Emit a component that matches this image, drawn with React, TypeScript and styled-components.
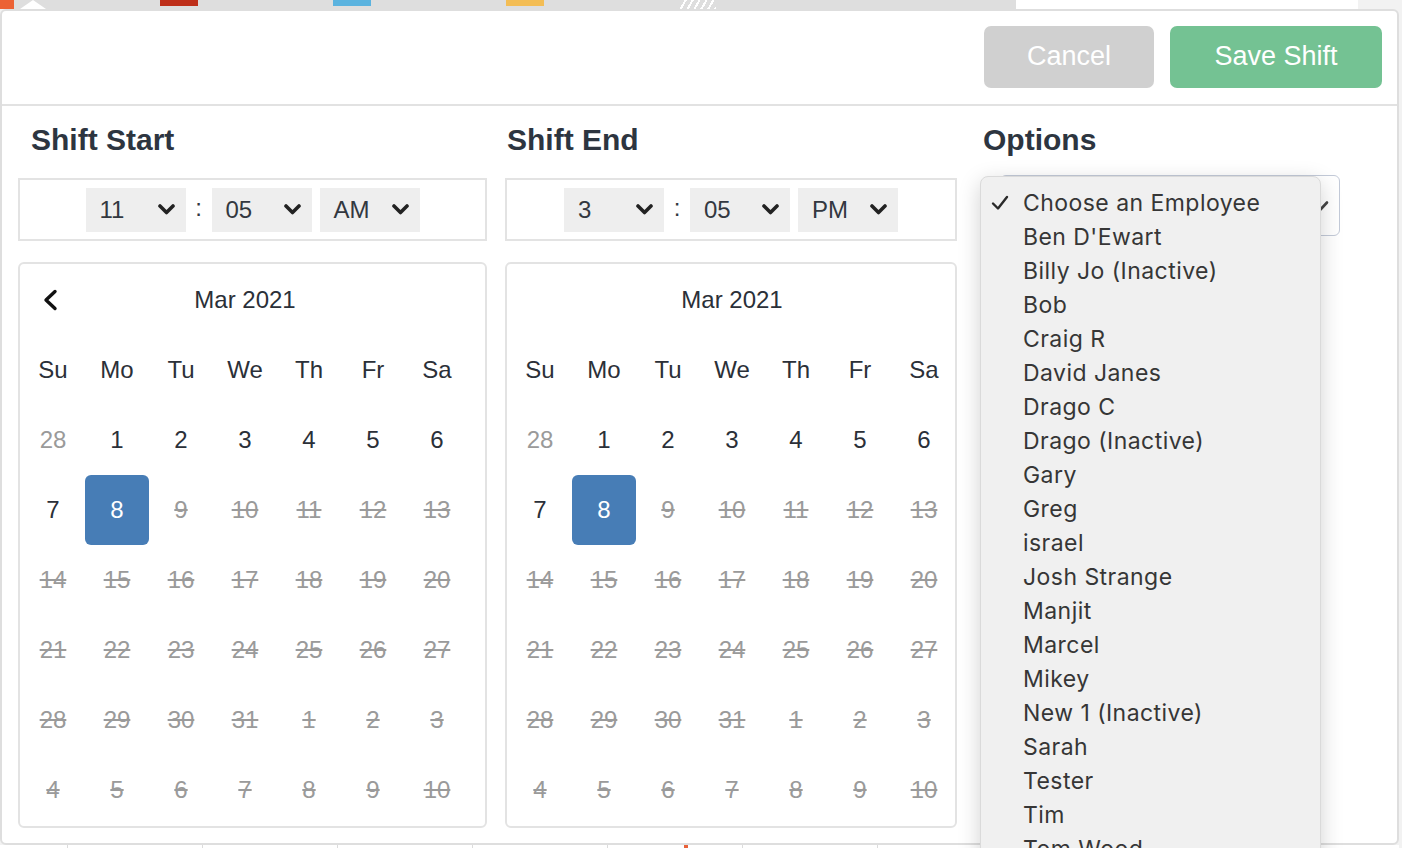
import React from 'react';
import styled, { createGlobalStyle } from 'styled-components';

const GlobalStyle = createGlobalStyle`
    html, body {
        margin: 0;
        padding: 0;
        background: #f2f2f2;
        font-family: "Liberation Sans", Arial, sans-serif;
    }
    * {
        box-sizing: border-box;
    }
`;

const Screen = styled.div`
    width: 1402px;
    height: 848px;
    overflow: hidden;
    display: flex;
    flex-direction: column;
    background: #f2f2f2;
`;

const TopStrip = styled.div`
    height: 9px;
    display: flex;
    flex-shrink: 0;
    background: #dedede;
`;

const Strip = styled.div<{ $w: number; $color?: string; $h?: number }>`
    width: ${(p) => p.$w}px;
    height: ${(p) => p.$h ?? 9}px;
    flex-shrink: 0;
    background: ${(p) => p.$color ?? 'transparent'};
`;

const Notch = styled.div`
    width: 26px;
    margin-left: 6px;
    height: 0;
    flex-shrink: 0;
    border-left: 13px solid transparent;
    border-right: 13px solid transparent;
    border-bottom: 9px solid #ffffff;
`;

const Hatch = styled.div`
    width: 36px;
    flex-shrink: 0;
    background: repeating-linear-gradient(120deg, #dedede 0 4px, #ffffff 4px 6px);
`;

const Modal = styled.div`
    width: 1399px;
    height: 836px;
    flex-shrink: 0;
    background: #ffffff;
    border: 2px solid #dedede;
    border-radius: 6px;
    display: flex;
    flex-direction: column;
`;

const Header = styled.div`
    height: 95px;
    flex-shrink: 0;
    display: flex;
    align-items: center;
    justify-content: flex-end;
    gap: 16px;
    padding: 0 15px 0 0;
    border-bottom: 2px solid #e2e2e2;
`;

const Button = styled.button<{ $primary?: boolean }>`
    height: 62px;
    width: ${(p) => (p.$primary ? 212 : 170)}px;
    border: none;
    border-radius: 7px;
    background: ${(p) => (p.$primary ? '#74c293' : '#d0d0d0')};
    color: #ffffff;
    font-family: "Liberation Sans", Arial, sans-serif;
    font-size: 27px;
    padding: 0;
    margin-top: -2px;
`;

const Body = styled.div`
    display: grid;
    grid-template-columns: 469px 452px 1fr;
    column-gap: 18px;
    padding: 17px 0 0 16px;
`;

const Column = styled.div`
    display: flex;
    flex-direction: column;
    position: relative;
`;

const Title = styled.h2<{ $indent: number }>`
    margin: 0 0 21px ${(p) => p.$indent}px;
    font-size: 30px;
    line-height: 34px;
    font-weight: 700;
    color: #2d3540;
`;

const TimeBox = styled.div`
    height: 63px;
    border: 2px solid #e3e3e3;
    display: flex;
    align-items: center;
    justify-content: center;
`;

const TimeSelect = styled.div<{ $gapLeft?: number }>`
    width: 100px;
    height: 44px;
    margin-left: ${(p) => p.$gapLeft ?? 0}px;
    background: #eeeeee;
    display: flex;
    align-items: center;
    justify-content: space-between;
    padding: 0 11px 0 14px;
    font-size: 24px;
    color: #333840;
`;

const Colon = styled.span`
    width: 26px;
    text-align: center;
    font-size: 24px;
    color: #333840;
    margin-top: -4px;
`;

const Calendar = styled.div`
    margin-top: 21px;
    height: 566px;
    border: 2px solid #e3e3e3;
    border-radius: 6px;
    padding: 1px;
`;

const CalHeader = styled.div`
    width: 448px;
    height: 70px;
    display: grid;
    grid-template-columns: 64px 1fr 64px;
    align-items: center;
`;

const BackArrow = styled.div`
    display: flex;
    align-items: center;
    padding-left: 21px;
`;

const MonthLabel = styled.div`
    text-align: center;
    font-size: 24px;
    color: #2b3038;
`;

const Grid = styled.div`
    width: 448px;
    display: grid;
    grid-template-columns: repeat(7, 64px);
    grid-auto-rows: 70px;
`;

type DayKind = 'normal' | 'muted' | 'off' | 'selected' | 'name';

const Day = styled.div<{ $kind: DayKind }>`
    display: flex;
    align-items: center;
    justify-content: center;
    font-size: 24px;
    border-radius: 6px;
    color: ${(p) =>
        p.$kind === 'selected' ? '#ffffff' : p.$kind === 'muted' || p.$kind === 'off' ? '#9a9a9a' : '#2b3038'};
    background: ${(p) => (p.$kind === 'selected' ? '#477db6' : 'transparent')};
    text-decoration: ${(p) => (p.$kind === 'off' ? 'line-through' : 'none')};
`;

const EmployeeSelect = styled.div`
    position: relative;
    margin: -3px 0 0 25px;
    width: 340px;
    height: 61px;
    border: 1.5px solid #c3cad8;
    border-radius: 6px;
    display: flex;
    align-items: center;
    justify-content: flex-end;
    padding-right: 10px;
`;

const Popup = styled.ul`
    position: absolute;
    top: 0;
    left: -21px;
    width: 341px;
    height: 720px;
    margin: 0;
    padding: 9px 0 0 0;
    list-style: none;
    background: #f0f0f0;
    border: 1px solid #dadada;
    border-radius: 8px;
    box-shadow: 0 6px 22px rgba(0, 0, 0, 0.18);
    font-family: Inter, "Noto Sans", sans-serif;
`;

const Option = styled.li`
    position: relative;
    height: 34px;
    line-height: 34px;
    padding-left: 42px;
    font-size: 23px;
    letter-spacing: 0.45px;
    color: #363636;
    white-space: nowrap;
`;

const Check = styled.span`
    position: absolute;
    left: 10px;
    top: 9px;
    display: flex;
`;

const BottomStrip = styled.div`
    height: 3px;
    width: 1399px;
    flex-shrink: 0;
    background:
        linear-gradient(90deg, transparent 684px, #e8623a 684px 688px, transparent 688px),
        repeating-linear-gradient(90deg, #ffffff 0 67px, #dcdcdc 67px 68px, #ffffff 68px 135px);
`;

const Chevron = () => (
    <svg width="17" height="11" viewBox="0 0 17 11">
        <path d="M2 2 L8.5 8.5 L15 2" fill="none" stroke="#222" strokeWidth="3.6" strokeLinecap="round" strokeLinejoin="round" />
    </svg>
);

const LeftArrow = () => (
    <svg width="17" height="22" viewBox="0 0 17 22">
        <path d="M13 2.5 L4 11 L13 19.5" fill="none" stroke="#111" strokeWidth="3.4" strokeLinecap="round" strokeLinejoin="round" />
    </svg>
);

const CheckMark = () => (
    <svg width="18" height="16" viewBox="0 0 18 16">
        <path d="M2 8.5 L7 13.5 L16 2" fill="none" stroke="#2a2a2a" strokeWidth="2.4" strokeLinecap="round" strokeLinejoin="round" />
    </svg>
);

const SmallCheck = () => (
    <svg width="14" height="12" viewBox="0 0 14 12">
        <path d="M2 6 L5.5 9.5 L12 2.5" fill="none" stroke="#444" strokeWidth="2.6" strokeLinecap="round" strokeLinejoin="round" />
    </svg>
);

const dayNames = ['Su', 'Mo', 'Tu', 'We', 'Th', 'Fr', 'Sa'];

const days: { n: number; kind: DayKind }[] = [
    { n: 28, kind: 'muted' },
    ...[1, 2, 3, 4, 5, 6, 7].map((n) => ({ n, kind: 'normal' as DayKind })),
    { n: 8, kind: 'selected' },
    ...Array.from({ length: 23 }, (_, i) => ({ n: i + 9, kind: 'off' as DayKind })),
    ...[1, 2, 3, 4, 5, 6, 7, 8, 9, 10].map((n) => ({ n, kind: 'off' as DayKind })),
];

const employees = [
    'Choose an Employee',
    "Ben D'Ewart",
    'Billy Jo (Inactive)',
    'Bob',
    'Craig R',
    'David Janes',
    'Drago C',
    'Drago (Inactive)',
    'Gary',
    'Greg',
    'israel',
    'Josh Strange',
    'Manjit',
    'Marcel',
    'Mikey',
    'New 1 (Inactive)',
    'Sarah',
    'Tester',
    'Tim',
    'Tom Wood',
];

const TimePicker: React.FC<{ hour: string; minute: string; period: string }> = ({ hour, minute, period }) => (
    <TimeBox>
        <TimeSelect>
            {hour}
            <Chevron />
        </TimeSelect>
        <Colon>:</Colon>
        <TimeSelect>
            {minute}
            <Chevron />
        </TimeSelect>
        <TimeSelect $gapLeft={8}>
            {period}
            <Chevron />
        </TimeSelect>
    </TimeBox>
);

const MonthCalendar: React.FC<{ showBack?: boolean }> = ({ showBack }) => (
    <Calendar>
        <CalHeader>
            <BackArrow>{showBack && <LeftArrow />}</BackArrow>
            <MonthLabel>Mar 2021</MonthLabel>
            <div />
        </CalHeader>
        <Grid>
            {dayNames.map((d) => (
                <Day key={d} $kind="name">
                    {d}
                </Day>
            ))}
            {days.map((d, i) => (
                <Day key={i} $kind={d.kind}>
                    {d.n}
                </Day>
            ))}
        </Grid>
    </Calendar>
);

const App: React.FC = () => (
    <>
        <GlobalStyle />
        <Screen>
            <TopStrip>
                <Strip $w={14} $color="#ec6234" />
                <Notch />
                <Strip $w={114} />
                <Strip $w={38} $h={6} $color="#be2f1a" />
                <Strip $w={135} />
                <Strip $w={38} $h={6} $color="#5bb3df" />
                <Strip $w={135} />
                <Strip $w={38} $h={6} $color="#f3bd55" />
                <Strip $w={136} />
                <Hatch />
                <Strip $w={300} />
                <Strip $w={342} $color="#ffffff" />
                <Strip $w={44} $color="#f2f2f2" />
            </TopStrip>
            <Modal>
                <Header>
                    <Button>Cancel</Button>
                    <Button $primary>Save Shift</Button>
                </Header>
                <Body>
                    <Column>
                        <Title $indent={13}>Shift Start</Title>
                        <TimePicker hour="11" minute="05" period="AM" />
                        <MonthCalendar showBack />
                    </Column>
                    <Column>
                        <Title $indent={2}>Shift End</Title>
                        <TimePicker hour="3" minute="05" period="PM" />
                        <MonthCalendar />
                    </Column>
                    <Column>
                        <Title $indent={8}>Options</Title>
                        <EmployeeSelect>
                            <SmallCheck />
                            <Popup>
                                {employees.map((e, i) => (
                                    <Option key={e}>
                                        {i === 0 && (
                                            <Check>
                                                <CheckMark />
                                            </Check>
                                        )}
                                        {e}
                                    </Option>
                                ))}
                            </Popup>
                        </EmployeeSelect>
                    </Column>
                </Body>
            </Modal>
            <BottomStrip />
        </Screen>
    </>
);

export default App;
